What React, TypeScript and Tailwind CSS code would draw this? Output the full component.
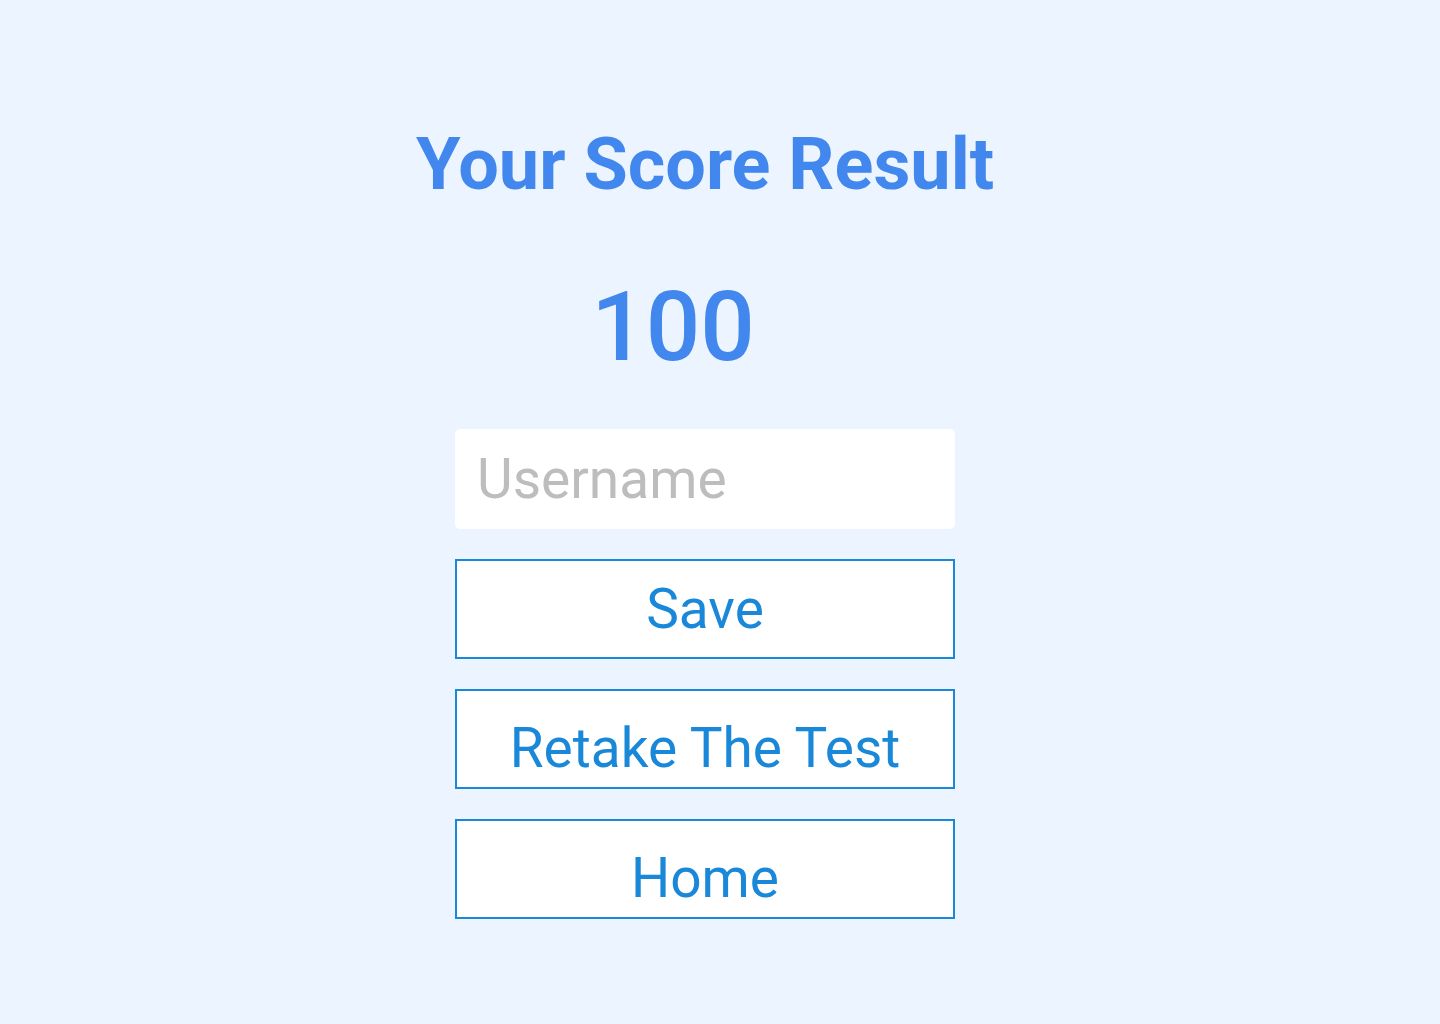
import React from "react";

export default function App() {
  return (
    <div
      className="min-h-[1024px] w-full bg-[#ecf5ff] flex flex-col items-center pr-[30px]"
      style={{ fontFamily: "Roboto, 'Liberation Sans', sans-serif" }}
    >
      <h1 className="mt-[129px] text-[72px] leading-[72px] font-bold text-[#4287ee]">
        Your Score Result
      </h1>
      <div className="mt-[78px] mr-[64px] text-[96px] leading-[96px] font-medium text-[#4287ee]">
        100
      </div>
      <input
        type="text"
        placeholder="Username"
        className="mt-[54px] w-[500px] h-[100px] rounded-[5px] bg-white pl-[22px] pr-[20px] text-[55px] text-gray-700 placeholder:text-[#bdbdbd] outline-none"
      />
      <button className="mt-[30px] w-[500px] h-[100px] border-2 border-[#1a88d8] bg-white text-[55px] leading-none text-[#1a88d8] flex items-center justify-center">
        Save
      </button>
      <button className="mt-[30px] w-[500px] h-[100px] border-2 border-[#1a88d8] bg-white text-[55px] leading-none text-[#1a88d8] flex items-center justify-center pt-[18px]">
        Retake The Test
      </button>
      <button className="mt-[30px] w-[500px] h-[100px] border-2 border-[#1a88d8] bg-white text-[55px] leading-none text-[#1a88d8] flex items-center justify-center pt-[18px]">
        Home
      </button>
    </div>
  );
}
